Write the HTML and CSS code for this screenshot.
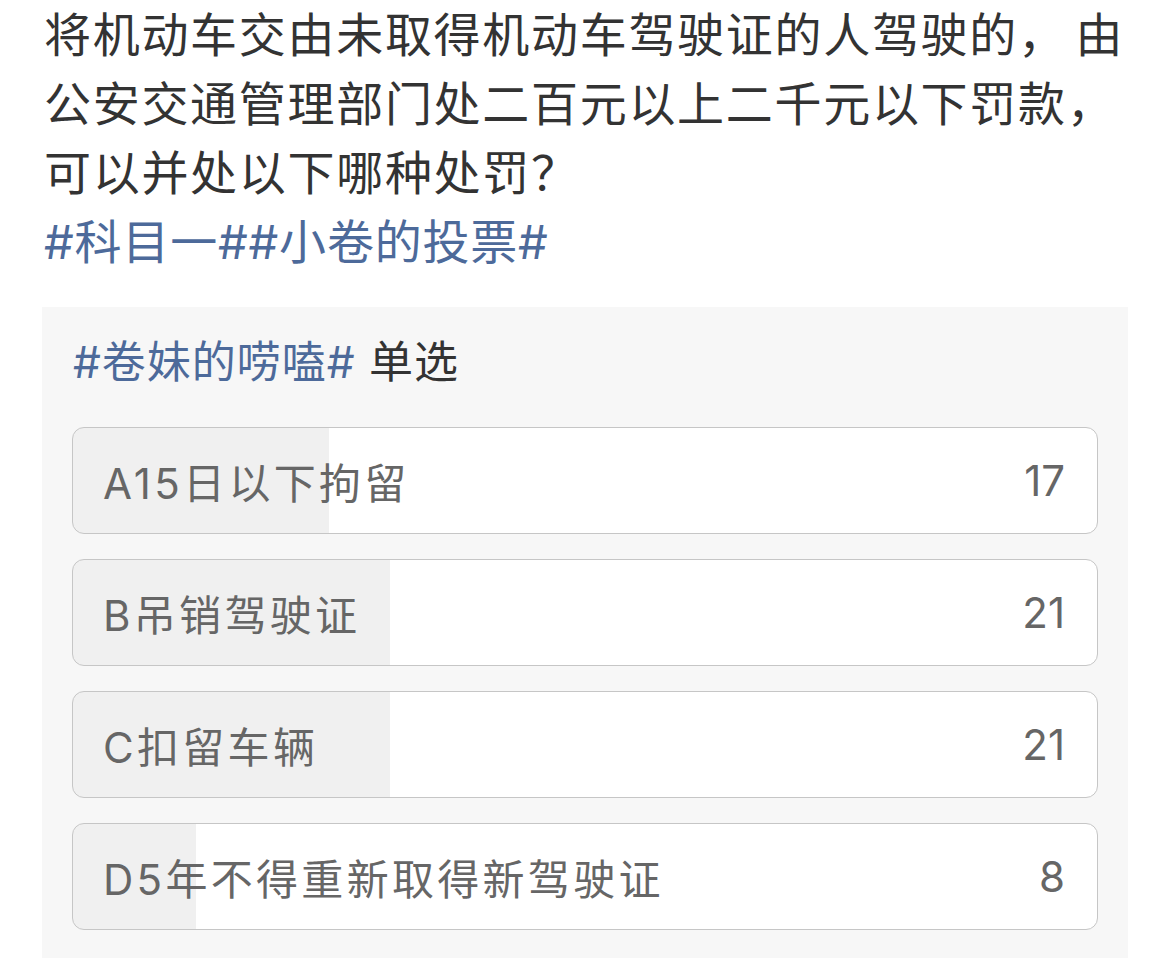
FILE: index.html
```html
<!DOCTYPE html>
<html lang="zh-CN">
<head>
<meta charset="utf-8">
<title>投票</title>
<link rel="stylesheet" href="styles.css">
</head>
<body>
<div class="page">
  <p class="question">将机动车交由未取得机动车驾驶证的人驾驶的， 由公安交通管理部门处二百元以上二千元以下罚款，可以并处以下哪种处罚？<br><span class="tag topic">#科目一##小卷的投票#</span></p>
  <section class="poll">
    <h2 class="poll-title"><span class="tag">#卷妹的唠嗑#</span> 单选</h2>
    <ul class="options">
      <li class="option" style="--pct: 25%"><span class="label">A15日以下拘留</span><span class="count">17</span></li>
      <li class="option" style="--pct: 31%"><span class="label">B吊销驾驶证</span><span class="count">21</span></li>
      <li class="option" style="--pct: 31%"><span class="label">C扣留车辆</span><span class="count">21</span></li>
      <li class="option" style="--pct: 12%"><span class="label">D5年不得重新取得新驾驶证</span><span class="count">8</span></li>
    </ul>
  </section>
</div>
</body>
</html>
```

FILE: styles.css
```css
* { box-sizing: border-box; }
html, body {
  margin: 0;
  padding: 0;
  background: #ffffff;
}
body {
  font-family: Inter, "Noto Sans CJK SC", sans-serif;
  color: #333333;
  overflow: hidden;
}
.page {
  padding: 0 42px 0 42px;
}
.question {
  margin: 0 -14px 0 2px;
  font-size: 47px;
  line-height: 69px;
  letter-spacing: 1.7px;
  word-spacing: -6px;
  color: #333333;
}
.tag {
  color: #4d6a9a;
}
.topic {
  letter-spacing: 0.8px;
}
.poll {
  margin-top: 31px;
  background: #f7f7f7;
  padding: 24px 30px 40px;
}
.poll-title {
  margin: 0 0 34px 1px;
  font-weight: normal;
  font-size: 44px;
  line-height: 62px;
  letter-spacing: 1px;
  color: #333333;
}
.options {
  list-style: none;
  margin: 0;
  padding: 0;
  display: flex;
  flex-direction: column;
  gap: 25px;
}
.option {
  height: 107px;
  border: 1px solid #c6c6c6;
  border-radius: 12px;
  background: linear-gradient(to right, #f0f0f0 var(--pct), #ffffff var(--pct));
  display: flex;
  align-items: center;
  justify-content: space-between;
  padding: 0 32px 0 30px;
  font-size: 42px;
  letter-spacing: 3.3px;
  color: #666666;
}
.count {
  letter-spacing: 0;
}
```
